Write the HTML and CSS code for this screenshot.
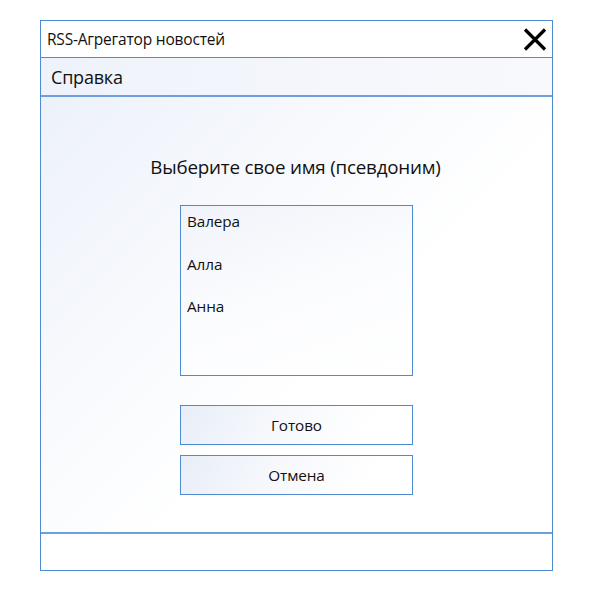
FILE: index.html
```html
<!DOCTYPE html>
<html lang="ru">
<head>
<meta charset="utf-8">
<title>RSS-Агрегатор новостей</title>
<link rel="stylesheet" href="styles.css">
</head>
<body>
<div class="window">
  <div class="titlebar">
    <span class="title">RSS-Агрегатор новостей</span>
    <svg class="close" width="24" height="23" viewBox="0 0 24 23" aria-label="Закрыть">
      <path d="M2 1.5 L22 21.5 M22 1.5 L2 21.5" stroke="#000" stroke-width="3.2" fill="none"/>
    </svg>
  </div>
  <div class="menubar"><span class="menu-item">Справка</span></div>
  <div class="content">
    <div class="heading">Выберите свое имя (псевдоним)</div>
    <div class="listbox">
      <div class="list-item">Валера</div>
      <div class="list-item">Алла</div>
      <div class="list-item">Анна</div>
    </div>
    <div class="buttons">
      <div class="btn">Готово</div>
      <div class="btn">Отмена</div>
    </div>
  </div>
  <div class="statusbar"></div>
</div>
</body>
</html>
```
FILE: styles.css
```css
* { box-sizing: border-box; }
html, body { margin: 0; padding: 0; background: #fff; }
body {
  font-family: "Open Sans", "Noto Sans", sans-serif;
  color: #111;
}
.window {
  margin: 20px 0 0 40px;
  width: 513px;
  height: 551px;
  border: 1px solid #4f8bd0;
  display: flex;
  flex-direction: column;
  background: linear-gradient(135deg, #eaeff9 0%, #f7f9fd 35%, #ffffff 60%, #ffffff 100%);
}
.titlebar {
  height: 37px;
  border-bottom: 1px solid #4f8bd0;
  display: flex;
  align-items: center;
  justify-content: space-between;
  padding: 0 5px 0 6px;
  background: #fff;
}
.title { font-size: 15.5px; letter-spacing: -0.2px; }
.close { display: block; margin-top: 1px; }
.menubar {
  height: 39px;
  border-bottom: 2px solid #6d9fdc;
  display: flex;
  align-items: center;
  padding-left: 10px;
  background: linear-gradient(90deg, #eef2fa 0%, #f5f7fc 60%, #f8f9fc 100%);
}
.menu-item { font-size: 18px; letter-spacing: -0.2px; }
.content {
  flex: 1;
  display: flex;
  flex-direction: column;
  align-items: center;
  padding-top: 58px;
  border-bottom: 2px solid #6d9fdc;
}
.heading {
  font-size: 18.8px;
  line-height: 24px;
  letter-spacing: -0.2px;
  margin-left: -2px;
}
.listbox {
  margin-top: 26px;
  width: 233px;
  height: 171px;
  border: 1px solid #4f8bd0;
  padding: 4px 6px;
  display: flex;
  flex-direction: column;
  gap: 20.5px;
  background: linear-gradient(160deg, #f0f3fa 0%, #fbfcfe 50%, #ffffff 100%);
}
.list-item { font-size: 15.3px; line-height: 22px; letter-spacing: -0.1px; }
.buttons {
  margin-top: 29px;
  display: flex;
  flex-direction: column;
  gap: 10px;
}
.btn {
  width: 233px;
  height: 40px;
  border: 1px solid #4f8bd0;
  display: flex;
  align-items: center;
  justify-content: center;
  font-size: 15.3px;
  letter-spacing: -0.1px;
  background: linear-gradient(120deg, #e8eef8 0%, #f6f8fc 40%, #ffffff 80%);
}
.statusbar {
  height: 36px;
  background: #fff;
}
```
